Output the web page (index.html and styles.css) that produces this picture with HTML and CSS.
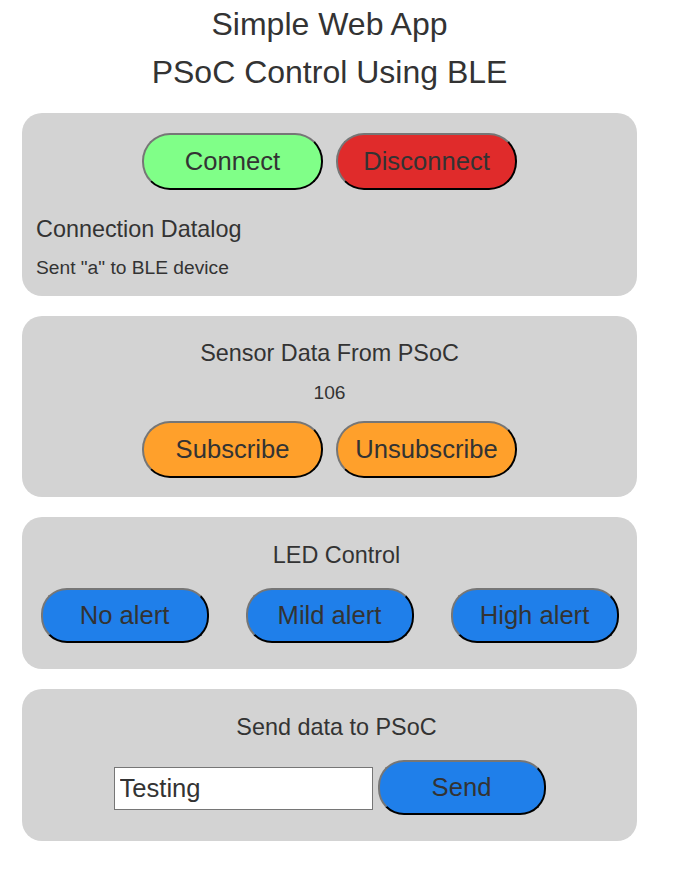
FILE: index.html
```html
<!DOCTYPE html>
<html>
<head>
<meta charset="utf-8">
<link rel="stylesheet" href="styles.css">
</head>
<body>
<div class="page">
  <h1 class="title">Simple Web App<br>PSoC Control Using BLE</h1>

  <section class="card card-connect">
    <div class="btn-row">
      <button class="btn btn-wide green">Connect</button>
      <button class="btn btn-wide red">Disconnect</button>
    </div>
    <h3 class="log-title">Connection Datalog</h3>
    <p class="log-text">Sent "a" to BLE device</p>
  </section>

  <section class="card card-sensor">
    <h3 class="card-title">Sensor Data From PSoC</h3>
    <p class="value">106</p>
    <div class="btn-row">
      <button class="btn btn-wide orange">Subscribe</button>
      <button class="btn btn-wide orange">Unsubscribe</button>
    </div>
  </section>

  <section class="card card-led">
    <h3 class="card-title shifted">LED Control</h3>
    <div class="led-grid">
      <div class="led-cell"><button class="btn btn-alert blue">No alert</button></div>
      <div class="led-cell"><button class="btn btn-alert blue">Mild alert</button></div>
      <div class="led-cell"><button class="btn btn-alert blue">High alert</button></div>
    </div>
  </section>

  <section class="card card-send">
    <h3 class="card-title shifted">Send data to PSoC</h3>
    <div class="send-row">
      <input class="text-input" type="text" value="Testing">
      <button class="btn btn-alert blue">Send</button>
    </div>
  </section>
</div>
</body>
</html>
```

FILE: styles.css
```css
html, body {
  margin: 0;
  padding: 0;
  background: #ffffff;
}

body {
  font-family: "Liberation Sans", Arial, sans-serif;
  color: #333333;
}

.page {
  width: 615px;
  margin-left: 22px;
}

.title {
  margin: 0 0 17px 0;
  font-size: 32px;
  font-weight: normal;
  line-height: 48px;
  text-align: center;
}

.card {
  background: #d3d3d3;
  border-radius: 20px;
  margin-bottom: 20px;
}

.card-connect {
  padding: 20px 14px 18px 14px;
  height: 145px;
}

.card-sensor {
  padding: 24px 0 19px 0;
  height: 138px;
  text-align: center;
}

.card-led {
  padding: 25px 0 26px 0;
  height: 101px;
  text-align: center;
}

.card-send {
  padding: 25px 0 26px 0;
  height: 101px;
  text-align: center;
}

.btn-row {
  display: flex;
  justify-content: center;
  gap: 13px;
}

.btn {
  font-family: "Liberation Sans", Arial, sans-serif;
  font-size: 25.6px;
  color: #333333;
  border-width: 2px;
  border-style: outset;
  border-color: #767676 #000000 #000000 #767676;
  padding: 0;
  cursor: pointer;
}

.btn-wide {
  width: 181px;
  height: 57px;
  border-radius: 28px;
}

.btn-alert {
  width: 168px;
  height: 55px;
  border-radius: 26px;
}

.green { background: #80ff88; }
.red { background: #e02b2b; }
.orange { background: #ffa02b; }
.blue { background: #1f7fea; }

.log-title {
  margin: 26px 0 0 0;
  font-size: 23.4px;
  font-weight: normal;
  line-height: 26px;
}

.log-text {
  margin: 16px 0 0 0;
  font-size: 19.2px;
  line-height: 20px;
}

.card-title {
  margin: 0;
  font-size: 23.4px;
  font-weight: normal;
  line-height: 26px;
}

.card-title.shifted {
  padding-left: 14px;
}

.value {
  margin: 17px 0 18px 0;
  font-size: 19.2px;
  line-height: 20px;
}

.led-grid {
  margin-top: 20px;
  display: grid;
  grid-template-columns: repeat(3, 1fr);
}

.led-cell {
  display: flex;
  justify-content: center;
}

.send-row {
  margin-top: 20px;
  display: flex;
  justify-content: center;
  align-items: center;
  gap: 5px;
}

.text-input {
  box-sizing: border-box;
  width: 259px;
  height: 43px;
  margin-top: 2px;
  border: 1px solid #767676;
  padding: 0 5px;
  font-family: "Liberation Sans", Arial, sans-serif;
  font-size: 25.6px;
  color: #333333;
  background: #ffffff;
}
```
